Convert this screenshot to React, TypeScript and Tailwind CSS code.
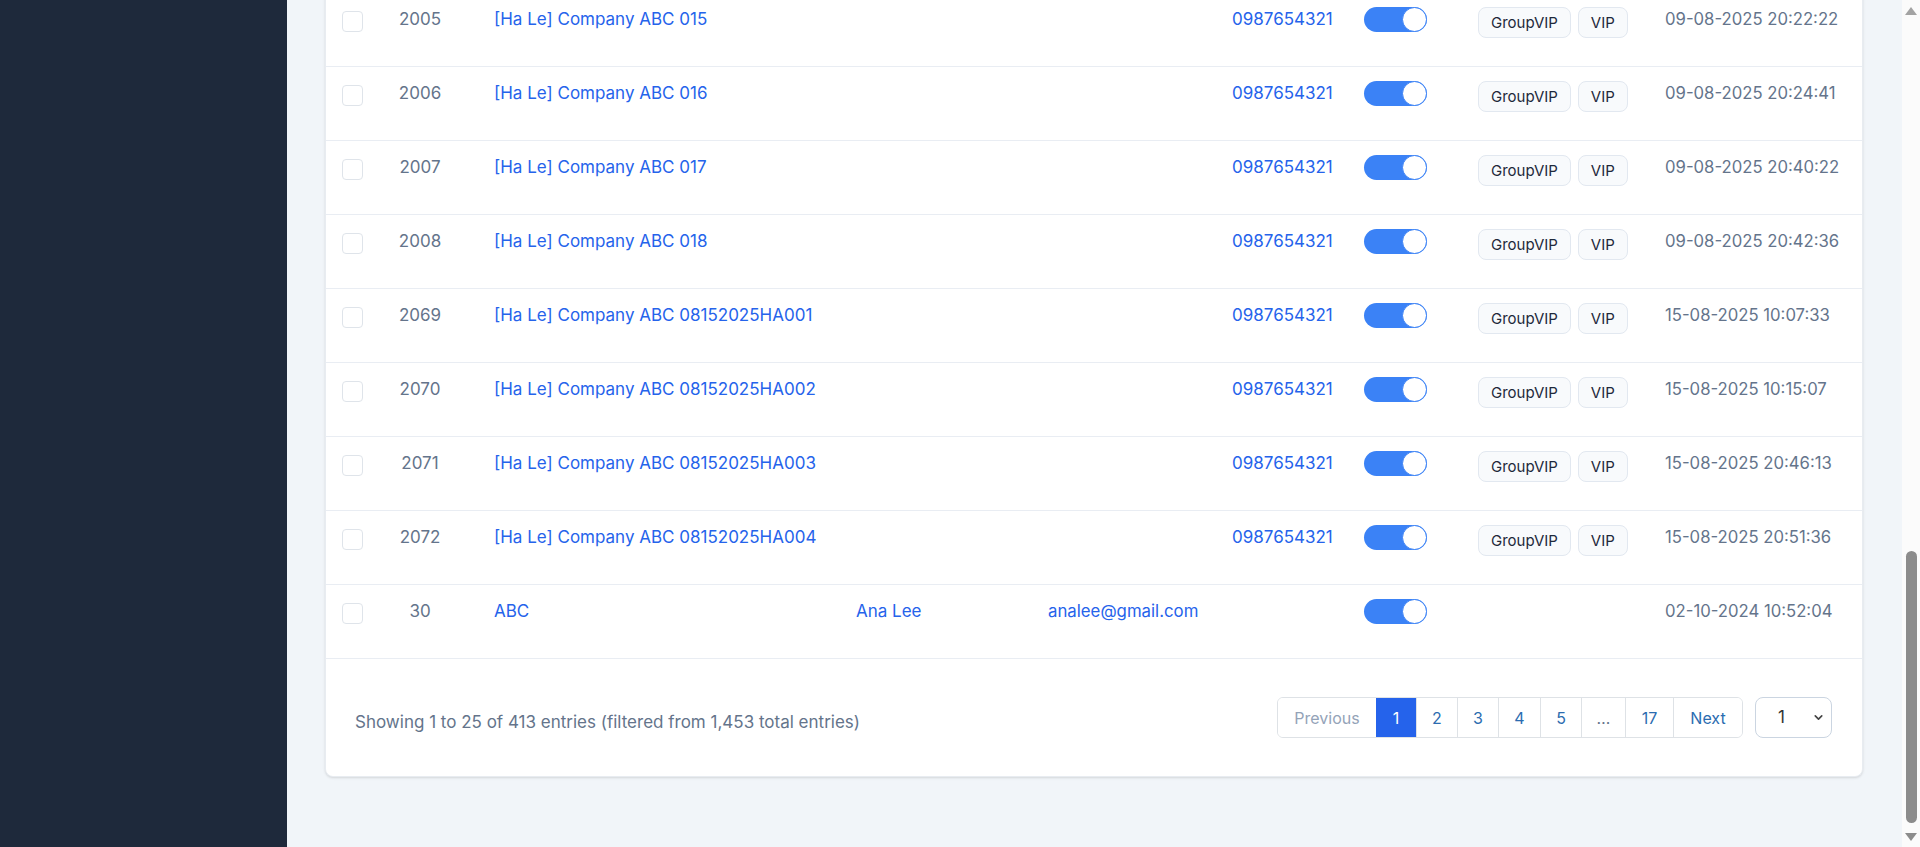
import React from "react";

type Row = {
  id: string;
  name: string;
  contact?: string;
  email?: string;
  phone?: string;
  badges: boolean;
  date: string;
};

const rows: Row[] = [
  { id: "2005", name: "[Ha Le] Company ABC 015", phone: "0987654321", badges: true, date: "09-08-2025 20:22:22" },
  { id: "2006", name: "[Ha Le] Company ABC 016", phone: "0987654321", badges: true, date: "09-08-2025 20:24:41" },
  { id: "2007", name: "[Ha Le] Company ABC 017", phone: "0987654321", badges: true, date: "09-08-2025 20:40:22" },
  { id: "2008", name: "[Ha Le] Company ABC 018", phone: "0987654321", badges: true, date: "09-08-2025 20:42:36" },
  { id: "2069", name: "[Ha Le] Company ABC 08152025HA001", phone: "0987654321", badges: true, date: "15-08-2025 10:07:33" },
  { id: "2070", name: "[Ha Le] Company ABC 08152025HA002", phone: "0987654321", badges: true, date: "15-08-2025 10:15:07" },
  { id: "2071", name: "[Ha Le] Company ABC 08152025HA003", phone: "0987654321", badges: true, date: "15-08-2025 20:46:13" },
  { id: "2072", name: "[Ha Le] Company ABC 08152025HA004", phone: "0987654321", badges: true, date: "15-08-2025 20:51:36" },
  { id: "30", name: "ABC", contact: "Ana Lee", email: "analee@gmail.com", badges: false, date: "02-10-2024 10:52:04" },
];

function Toggle() {
  return (
    <div className="w-[63px] h-[25px] rounded-full bg-[#3b82f6] flex items-center justify-end">
      <div className="w-[25px] h-[25px] rounded-full bg-white border border-[#3b82f6]" />
    </div>
  );
}

function Badge({ children }: { children: React.ReactNode }) {
  return (
    <span className="h-[31px] px-[12px] flex items-center rounded-lg border border-[#e2e8f0] bg-[#f8fafc] text-[15px] text-[#1e293b]">
      {children}
    </span>
  );
}

function TableRow({ r }: { r: Row }) {
  return (
    <div className="grid grid-cols-[56px_76px_398px_192px_184px_132px_114px_187px_1fr] h-[74px] border-b border-[#e9edf3] pt-[14px] text-[17px] leading-[24px]">
      <div className="pl-4 pt-1">
        <div className="w-[21px] h-[21px] rounded-[4px] border border-[#dfe4ea] bg-white" />
      </div>
      <div className="text-center text-[#64748b]">{r.id}</div>
      <div className="pl-[36px] text-[#2563eb]">{r.name}</div>
      <div className="text-[#2563eb]">{r.contact ?? ""}</div>
      <div className="text-[#2563eb] text-[16.8px]">{r.email ?? ""}</div>
      <div className="text-[#2563eb]">{r.phone ?? ""}</div>
      <div>
        <Toggle />
      </div>
      <div className="flex gap-[7px] items-start">
        {r.badges && (
          <>
            <Badge>GroupVIP</Badge>
            <Badge>VIP</Badge>
          </>
        )}
      </div>
      <div className="text-[#64748b] text-[16.7px]">{r.date}</div>
    </div>
  );
}

function Pagination() {
  const cells: { label: string; w: string; cls: string }[] = [
    { label: "2", w: "w-[41px]", cls: "text-[#2b6cb0]" },
    { label: "3", w: "w-[41px]", cls: "text-[#2b6cb0]" },
    { label: "4", w: "w-[42px]", cls: "text-[#2b6cb0]" },
    { label: "5", w: "w-[41px]", cls: "text-[#2b6cb0]" },
    { label: "…", w: "w-[44px]", cls: "text-[#64748b]" },
    { label: "17", w: "w-[48px]", cls: "text-[#2b6cb0]" },
    { label: "Next", w: "w-[69px]", cls: "text-[#2b6cb0]" },
  ];
  return (
    <div className="flex h-[41px] rounded-md border border-[#dee2e6] overflow-hidden text-[16px]">
      <div className="w-[98px] flex items-center justify-center text-[#94a3b8] bg-white">Previous</div>
      <div className="w-[40px] flex items-center justify-center bg-[#2563eb] text-white">1</div>
      {cells.map((c) => (
        <div
          key={c.label}
          className={c.w + " flex items-center justify-center border-l border-[#dee2e6] bg-white " + c.cls}
        >
          {c.label}
        </div>
      ))}
    </div>
  );
}

function Scrollbar() {
  return (
    <div className="w-[18px] h-full bg-[#fbfbfb] flex flex-col items-center">
      <svg width="14" height="10" viewBox="0 0 14 10" className="mt-[6px]">
        <polygon points="7,1 13,9 1,9" fill="#a3a3a3" />
      </svg>
      <div className="flex-1" />
      <div className="w-[11px] h-[272px] rounded-full bg-[#8c8c8c]" />
      <svg width="14" height="10" viewBox="0 0 14 10" className="mt-[9px] mb-[5px]">
        <polygon points="1,1 13,1 7,9" fill="#8c8c8c" />
      </svg>
    </div>
  );
}

export default function App() {
  return (
    <div
      className="flex h-[847px] w-[1920px] overflow-hidden"
      style={{ fontFamily: "Inter, 'Noto Sans', sans-serif" }}
    >
      <aside className="w-[287px] shrink-0 bg-[#1e293b]" />
      <main className="flex-1 bg-[#f1f5f9] pl-[38px] pr-[39px] overflow-hidden">
        <div className="-mt-[7px] bg-white rounded-b-lg border border-t-0 border-[#e8ecf1] shadow-sm">
          {rows.map((r) => (
            <TableRow key={r.id} r={r} />
          ))}
          <div className="flex items-center justify-between h-[117px] pl-[29px] pr-[30px]">
            <div className="text-[17px] text-[#64748b] mt-[10px]">
              Showing 1 to 25 of 413 entries (filtered from 1,453 total entries)
            </div>
            <div className="flex items-center gap-3">
              <Pagination />
              <div className="w-[77px] h-[41px] rounded-lg border border-[#cbd5e1] flex items-center justify-between pl-[22px] pr-[6px] text-[17px] text-[#333]">
                <span>1</span>
                <svg width="13" height="13" viewBox="0 0 24 24" fill="none" stroke="#444" strokeWidth="3" strokeLinecap="round" strokeLinejoin="round">
                  <path d="M6 9l6 6 6-6" />
                </svg>
              </div>
            </div>
          </div>
        </div>
      </main>
      <Scrollbar />
    </div>
  );
}
